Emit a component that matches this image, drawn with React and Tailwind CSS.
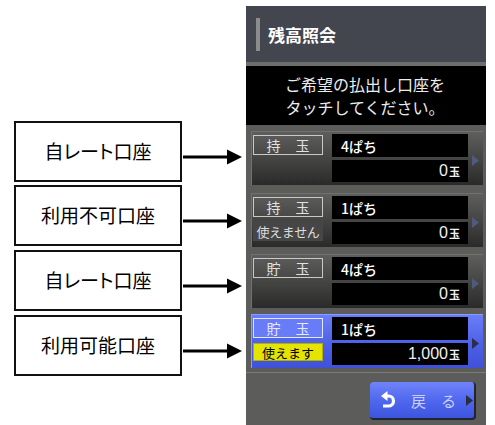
import React from "react";

const jp = { fontFamily: '"Noto Sans CJK JP", "Noto Sans", sans-serif' };

function Arrow() {
  return (
    <svg width="60" height="16" viewBox="0 0 60 16" className="mt-[11px] block">
      <rect x="1" y="6.5" width="46" height="3" fill="#000" />
      <polygon points="45,0.5 60,8 45,15.5" fill="#000" />
    </svg>
  );
}

function Note({ text, className }) {
  return (
    <div className={"flex items-center " + className}>
      <div className="w-[168px] h-[61px] border-2 border-[#111] flex items-center justify-center text-[19px] text-black [font-feature-settings:'palt']">
        {text}
      </div>
      <Arrow />
    </div>
  );
}

function Tri({ color }) {
  return (
    <svg width="7" height="11" viewBox="0 0 7 11" className="block">
      <polygon points="0,0 7,5.5 0,11" fill={color} />
    </svg>
  );
}

function Card({ kind, name, amount, status, active }) {
  const cardBg = active
    ? "bg-[linear-gradient(#6a7ef8,#4a5ee6_60%,#3f52d8)] border-t border-l border-[#8a9bff]"
    : "bg-[linear-gradient(#5e5f5d,#474846_45%,#2a2a2a)] border-t border-l border-[#707170]";
  const labelCls = active
    ? "bg-[#687cf7] border border-[#e4e8ff] text-[#e6e9ff]"
    : "border border-[#c9c9c9] text-[#e2e2e2]";
  return (
    <div className={"h-[54px] flex items-stretch pl-[1px] py-[2px] " + cardBg}>
      <div className="w-[70px] flex flex-col pt-[1px]">
        <div className={"h-[20px] flex items-center justify-center text-[14px] leading-none " + labelCls}>
          {kind}
          <span className="w-[15px]" />
          玉
        </div>
        {status === "ng" && (
          <div className="mt-[4px] h-[20px] bg-[#464646] text-[#dcdcdc] text-[13px] leading-none flex items-center justify-center tracking-[-0.3px]">
            使えません
          </div>
        )}
        {status === "ok" && (
          <div className="mt-[5px] h-[18px] bg-[#e4e400] border border-[#b0b000] text-black text-[13px] leading-none flex items-center justify-center">
            使えます
          </div>
        )}
      </div>
      <div className="ml-[9px] w-[136px] flex flex-col gap-[3px]">
        <div className="h-[23px] bg-black flex items-center pl-[9px] text-white text-[14px] font-medium leading-none">
          {name}
        </div>
        <div className="h-[22px] bg-black flex items-center justify-end pr-[8px] text-[#f0f0f0] leading-none">
          <span className="text-[16px]" style={{ fontFamily: '"Liberation Sans", sans-serif' }}>
            {amount}
          </span>
          <span className="text-[11px] ml-[1px] font-bold">玉</span>
        </div>
      </div>
      <div className="flex-1 flex items-center justify-center pt-[3px]">
        <Tri color={active ? "#2c2f48" : "#4e5b7e"} />
      </div>
    </div>
  );
}

export default function App() {
  return (
    <div className="w-[495px] h-[425px] bg-white flex overflow-hidden" style={jp}>
      <div className="pl-[14px] pt-[121px] flex flex-col">
        <Note text="自レート口座" className="" />
        <Note text="利用不可口座" className="mt-[3px]" />
        <Note text="自レート口座" className="mt-[4px]" />
        <Note text="利用可能口座" className="mt-[4px]" />
      </div>
      <div className="ml-[4px] mt-[6px] w-[240px] h-[419px] bg-[#5c5d5a] flex flex-col">
        <div className="h-[56px] bg-[#43464f] flex items-center pl-[10px]">
          <div className="w-[4px] h-[33px] bg-[#8c8c8c]" />
          <div className="ml-[8px] text-[17px] font-bold text-white leading-none">残高照会</div>
        </div>
        <div className="h-[4px] bg-[#6d6e6a]" />
        <div className="h-[59px] bg-black flex flex-col items-center justify-center text-[16px] leading-[23px] text-[#ececec] pr-[2px]">
          <div>ご希望の払出し口座を</div>
          <div>タッチしてください。</div>
        </div>
        <div className="pl-[5px] pr-[3px] pt-[6px] flex flex-col">
          <Card kind="持" name="4ぱち" amount="0" />
          <div className="h-[8px]" />
          <Card kind="持" name="1ぱち" amount="0" status="ng" />
          <div className="h-[7px]" />
          <Card kind="貯" name="4ぱち" amount="0" />
          <div className="h-[6px]" />
          <Card kind="貯" name="1ぱち" amount="1,000" status="ok" active />
        </div>
        <div className="mt-[4px] h-[1px] bg-[#7a7b78]" />
        <div className="flex justify-end pr-[10px] pt-[9px]">
          <div className="w-[106px] h-[38px] rounded-[4px] bg-[linear-gradient(#7084fa,#5068ee_50%,#3d54de)] border-r-2 border-b-2 border-[#23252e] flex items-center pl-[11px]">
            <svg width="15" height="19" viewBox="0 0 15 19" className="block">
              <path d="M5 5 H7.5 A5 5 0 0 1 7.5 15 H2" fill="none" stroke="#fff" strokeWidth="3.2" />
              <polygon points="0,5 6.5,0 6.5,10" fill="#fff" />
            </svg>
            <div className="ml-[15px] text-[15px] text-[#c9d0ff] leading-none flex">
              戻<span className="w-[15px]" />る
            </div>
            <div className="ml-auto mr-[1px]">
              <Tri color="#2a2d40" />
            </div>
          </div>
        </div>
      </div>
    </div>
  );
}
